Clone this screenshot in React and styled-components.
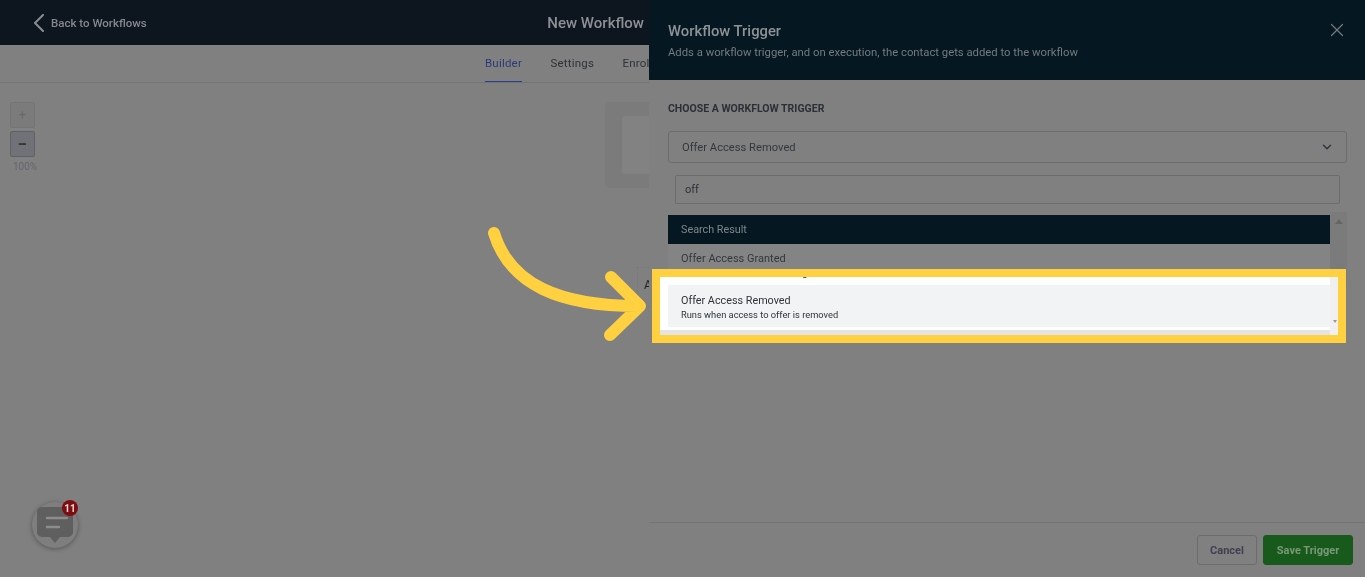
import React from 'react'
import styled, { createGlobalStyle } from 'styled-components'
import { ChevronDown, X } from 'lucide-react'

const GlobalStyle = createGlobalStyle`
  html, body {
    margin: 0;
    padding: 0;
    background: #808080;
    overflow: hidden;
  }
  * { box-sizing: border-box; }
`

const Screen = styled.div`
  position: relative;
  width: 1365px;
  height: 577px;
  overflow: hidden;
  font-family: Roboto, "Liberation Sans", sans-serif;
`

const Dimmed = styled.div`
  display: flex;
  width: 100%;
  height: 100%;
  filter: blur(0.6px);
`

const Builder = styled.div`
  position: relative;
  width: 649px;
  flex: none;
  overflow: hidden;
  background: #808080;
`

const TopBar = styled.div`
  display: flex;
  align-items: center;
  height: 45px;
  padding: 0 5px 0 33px;
  background: #0d151f;
`

const BackLink = styled.div`
  display: flex;
  align-items: center;
  gap: 6px;
  font-size: 11.5px;
  font-weight: 500;
  color: #85888c;
`

const WorkflowName = styled.div`
  margin-left: auto;
  font-size: 15px;
  font-weight: 500;
  color: #8d9094;
`

const TabRow = styled.div`
  display: flex;
  gap: 28.5px;
  width: 700px;
  height: 38px;
  padding-left: 485px;
  border-bottom: 1px solid #737373;
`

const Tab = styled.div`
  height: 37px;
  padding-top: 11px;
  font-size: 11.5px;
  letter-spacing: 0.2px;
  white-space: nowrap;
  color: ${props => (props.$active ? '#2b3a78' : '#2e3238')};
  border-bottom: 1px solid ${props => (props.$active ? '#2b3f8f' : 'transparent')};
`

const Canvas = styled.div`
  display: flex;
  justify-content: space-between;
  padding: 19px 0 0 10px;
`

const ZoomControls = styled.div`
  display: flex;
  flex-direction: column;
  align-items: flex-start;
  gap: 3px;
  width: 29px;
`

const ZoomButton = styled.div`
  display: flex;
  align-items: center;
  justify-content: center;
  width: 25px;
  height: 26px;
  border-radius: 2px;
  border: 1px solid ${props => (props.$strong ? '#5f6166' : '#747474')};
  background: ${props => (props.$strong ? '#717278' : '#7b7b7b')};
  font-size: ${props => (props.$strong ? '17px' : '12px')};
  font-weight: ${props => (props.$strong ? 700 : 400)};
  color: ${props => (props.$strong ? '#34373c' : '#686868')};
`

const ZoomLabel = styled.div`
  margin: 1px 0 0 3px;
  font-size: 10px;
  color: #62666c;
`

const NodeShell = styled.div`
  display: flex;
  align-items: center;
  width: 44px;
  height: 86px;
  padding-left: 17px;
  border-radius: 5px 0 0 5px;
  background: #7b7b7b;
`

const NodeCard = styled.div`
  width: 100%;
  height: 58px;
  border-radius: 3px 0 0 3px;
  background: #828282;
`

const NextNode = styled.div`
  position: absolute;
  top: 267px;
  right: -10px;
  width: 22px;
  height: 40px;
  border: 1px dotted #777;
  padding: 10px 0 0 6px;
  font-size: 12px;
  color: #222;
`

const ChatBubble = styled.div`
  position: absolute;
  left: 32px;
  top: 502px;
  width: 46px;
  height: 46px;
  border-radius: 50%;
  display: flex;
  align-items: center;
  justify-content: center;
  background: #7e7e7e;
  box-shadow: 0 1px 5px rgba(0, 0, 0, 0.35);
`

const ChatBadge = styled.div`
  position: absolute;
  top: -2px;
  right: 0;
  width: 16px;
  height: 16px;
  border-radius: 50%;
  display: flex;
  align-items: center;
  justify-content: center;
  background: #7e0d10;
  font-size: 10px;
  font-weight: 700;
  color: #e8dcdc;
`

const Drawer = styled.div`
  display: flex;
  flex-direction: column;
  flex: 1;
  background: #808080;
`

const DrawerHeader = styled.div`
  position: relative;
  height: 80px;
  padding: 22px 19px 0;
  background: #051720;
`

const DrawerTitle = styled.div`
  font-size: 14.8px;
  font-weight: 500;
  line-height: 18px;
  color: #8d9296;
`

const DrawerSub = styled.div`
  margin-top: 6px;
  font-size: 11.3px;
  line-height: 14px;
  color: #747c80;
`

const CloseIcon = styled(X)`
  position: absolute;
  top: 19px;
  right: 17px;
  color: #72797f;
`

const DrawerBody = styled.div`
  flex: 1;
  padding: 22px 18px 0 19px;
`

const FieldLabel = styled.div`
  font-size: 10.5px;
  font-weight: 700;
  line-height: 13px;
  color: #2b2f36;
`

const Select = styled.div`
  display: flex;
  align-items: center;
  justify-content: space-between;
  height: 32px;
  margin-top: 16px;
  padding: 0 12px 0 13px;
  border: 1px solid #6c6c6c;
  border-radius: 3px;
  font-size: 11.2px;
  color: #33373d;
`

const SearchBox = styled.div`
  height: 29px;
  margin: 12px 7px 0;
  padding: 0 10px 0 9px;
  display: flex;
  align-items: center;
  border: 1px solid #6c6c6c;
  border-radius: 2px;
  font-size: 11px;
  color: #2b2f36;
`

const ResultList = styled.div`
  position: relative;
  display: flex;
  flex-direction: column;
  margin-top: 11px;
  padding-right: 17px;
`

const ResultHeader = styled.div`
  height: 29px;
  padding-left: 13px;
  display: flex;
  align-items: center;
  font-size: 10.8px;
  background: #051720;
  color: #7d878c;
`

const ResultItem = styled.div`
  padding: 8px 13px;
  font-size: 11px;
  line-height: 13px;
  background: #848484;
  color: #33373d;
`

const ResultDesc = styled.div`
  margin-top: 2px;
  font-size: 9.3px;
  line-height: 12px;
  color: #4c4c4c;
`

const ScrollTrack = styled.div`
  position: absolute;
  top: -3px;
  right: 0;
  bottom: 0;
  width: 17px;
  background: #7b7b7b;
`

const ScrollArrow = styled.div`
  position: absolute;
  top: 7px;
  right: 4px;
  width: 0;
  height: 0;
  border-left: 4px solid transparent;
  border-right: 4px solid transparent;
  border-bottom: 5px solid #666;
`

const Footer = styled.div`
  display: flex;
  justify-content: flex-end;
  gap: 6px;
  height: 55px;
  padding: 12px 12px 0 0;
  border-top: 1px solid #757575;
`

const FooterButton = styled.div`
  display: flex;
  align-items: center;
  justify-content: center;
  width: ${props => (props.$primary ? '90px' : '60px')};
  height: 30px;
  border-radius: 3px;
  font-size: 11px;
  font-weight: 700;
  background: ${props => (props.$primary ? '#185a1b' : 'transparent')};
  border: 1px solid ${props => (props.$primary ? '#185a1b' : '#6c6c6c')};
  color: ${props => (props.$primary ? '#789878' : '#3f4150')};
`

const Highlight = styled.div`
  position: absolute;
  left: 652px;
  top: 269px;
  width: 694px;
  height: 74px;
  border: 8px solid #ffd040;
  background: #e4e4e4;
`

const HighlightList = styled.div`
  display: flex;
  flex-direction: column;
  height: 53px;
  background: #ffffff;
  padding: 0 8px 3px 8px;
`

const ClippedLine = styled.div`
  height: 8px;
  overflow: hidden;
  padding-left: 13px;
`

const ClippedText = styled.div`
  margin-top: -10px;
  font-size: 9.3px;
  line-height: 12px;
  color: #2f3338;
`

const ActiveItem = styled.div`
  flex: 1;
  padding: 9px 13px 0;
  background: #f2f3f5;
  filter: blur(0.25px);
`

const ActiveTitle = styled.div`
  font-size: 10.8px;
  line-height: 14px;
  color: #2f3338;
`

const ActiveDesc = styled.div`
  margin-top: 1px;
  font-size: 9.3px;
  line-height: 12px;
  color: #2f3338;
`

const HighlightTrack = styled.div`
  position: absolute;
  top: 0;
  right: 0;
  bottom: 0;
  width: 8px;
  background: #f0f0f0;
`

const TrackArrow = styled.div`
  position: absolute;
  right: 1px;
  bottom: 12px;
  width: 0;
  height: 0;
  border-left: 2px solid transparent;
  border-right: 2px solid transparent;
  border-top: 3px solid #999;
`

const ArrowArt = styled.svg`
  position: absolute;
  left: 0;
  top: 0;
  pointer-events: none;
`

const App = () => {
  return (
    <Screen>
      <GlobalStyle />
      <Dimmed>
        <Builder>
          <TopBar>
            <BackLink>
              <svg width="12" height="18" viewBox="0 0 12 18">
                <path d="M10 1L2 9L10 17" fill="none" stroke="#8a8d90" strokeWidth="2" strokeLinecap="round" strokeLinejoin="round" />
              </svg>
              Back to Workflows
            </BackLink>
            <WorkflowName>New Workflow</WorkflowName>
          </TopBar>
          <TabRow>
            <Tab $active>Builder</Tab>
            <Tab>Settings</Tab>
            <Tab>Enrollment</Tab>
          </TabRow>
          <Canvas>
            <ZoomControls>
              <ZoomButton>+</ZoomButton>
              <ZoomButton $strong>−</ZoomButton>
              <ZoomLabel>100%</ZoomLabel>
            </ZoomControls>
            <NodeShell>
              <NodeCard />
            </NodeShell>
          </Canvas>
          <NextNode>A</NextNode>
          <ChatBubble>
            <svg width="40" height="44" viewBox="0 0 40 44">
              <path d="M7 4h26a5 5 0 0 1 5 5v20a5 5 0 0 1-5 5h-8l-5 6-5-6H7a5 5 0 0 1-5-5V9a5 5 0 0 1 5-5z" fill="#5f5f5f" />
              <path d="M12 15h20M12 24h12" stroke="#8c8c8c" strokeWidth="2.4" strokeLinecap="round" />
            </svg>
            <ChatBadge>11</ChatBadge>
          </ChatBubble>
        </Builder>
        <Drawer>
          <DrawerHeader>
            <DrawerTitle>Workflow Trigger</DrawerTitle>
            <DrawerSub>Adds a workflow trigger, and on execution, the contact gets added to the workflow</DrawerSub>
            <CloseIcon size={22} strokeWidth={1.3} />
          </DrawerHeader>
          <DrawerBody>
            <FieldLabel>CHOOSE A WORKFLOW TRIGGER</FieldLabel>
            <Select>
              Offer Access Removed
              <ChevronDown size={14} strokeWidth={2.6} />
            </Select>
            <SearchBox>off</SearchBox>
            <ResultList>
              <ResultHeader>Search Result</ResultHeader>
              <ResultItem>
                Offer Access Granted
                <ResultDesc>Runs when access to offer is granted</ResultDesc>
              </ResultItem>
              <ScrollTrack>
                <ScrollArrow />
              </ScrollTrack>
            </ResultList>
          </DrawerBody>
          <Footer>
            <FooterButton>Cancel</FooterButton>
            <FooterButton $primary>Save Trigger</FooterButton>
          </Footer>
        </Drawer>
      </Dimmed>
      <Highlight>
        <HighlightList>
          <ClippedLine>
            <ClippedText>Runs when access to offer is granted</ClippedText>
          </ClippedLine>
          <ActiveItem>
            <ActiveTitle>Offer Access Removed</ActiveTitle>
            <ActiveDesc>Runs when access to offer is removed</ActiveDesc>
          </ActiveItem>
        </HighlightList>
        <HighlightTrack>
          <TrackArrow />
        </HighlightTrack>
      </Highlight>
      <ArrowArt width="1365" height="577" viewBox="0 0 1365 577">
        <path
          d="M494 233C510 285 560 306 638 306M611 277L640 306L610 335"
          fill="none"
          stroke="#ffd040"
          strokeWidth="12"
          strokeLinecap="round"
          strokeLinejoin="round"
        />
      </ArrowArt>
    </Screen>
  )
}

export default App
